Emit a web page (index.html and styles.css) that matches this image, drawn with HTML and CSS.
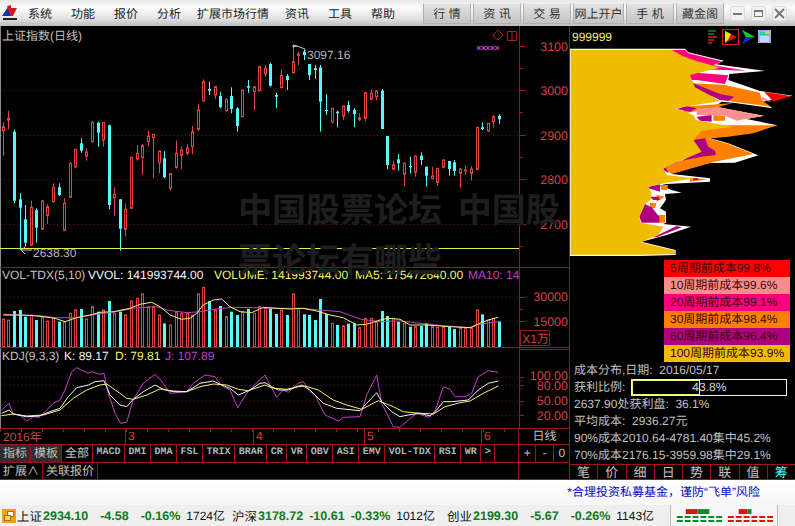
FILE: index.html
```html
<!DOCTYPE html>
<html lang="zh-CN">
<head>
    <meta charset="UTF-8">
    <title>上证指数(日线)</title>
    <link rel="stylesheet" href="styles.css">
</head>
<body>
    <header class="topbar">
        <svg class="logo" width="16" height="17" viewBox="0 0 16 17">
            <polygon points="0,11 6,2 9,11" fill="#1c2f9c"/>
            <polygon points="5,1 9,0 9,3 15,3 11,11 9,11" fill="#d81818"/>
            <rect x="1" y="13" width="14" height="2" fill="#222"/>
        </svg>
        <nav class="menu">
            <a href="#">系统</a>
            <a href="#">功能</a>
            <a href="#">报价</a>
            <a href="#">分析</a>
            <a href="#" class="long">扩展市场行情</a>
            <a href="#">资讯</a>
            <a href="#">工具</a>
            <a href="#">帮助</a>
        </nav>
        <div class="quick-tabs">
            <a href="#">行 情</a>
            <a href="#">资 讯</a>
            <a href="#">交 易</a>
            <a href="#" class="wide">网上开户</a>
            <a href="#">手 机</a>
            <a href="#">藏金阁</a>
        </div>
        <div class="win-buttons">
            <button class="win-btn"><svg width="11" height="11"><rect x="1" y="5" width="9" height="2" fill="#777"/></svg></button>
            <button class="win-btn"><svg width="11" height="11"><rect x="1.5" y="2.5" width="8" height="6" fill="none" stroke="#777"/><rect x="1" y="2" width="9" height="2" fill="#777"/></svg></button>
            <button class="win-btn"><svg width="11" height="11"><path d="M1 1l9 9M10 1l-9 9" stroke="#777" stroke-width="2"/></svg></button>
        </div>
    </header>

    <main class="workspace">
        <section class="chart-pane">
            <svg class="chart" width="570" height="402" viewBox="0 26 570 402">
                <rect x="0" y="26" width="1" height="402" fill="#8a8a8a"/>

                <!-- grid -->
                <g class="grid">
                    <line x1="1" x2="519" y1="90.5" y2="90.5"/>
                    <line x1="1" x2="519" y1="135.5" y2="135.5"/>
                    <line x1="1" x2="519" y1="179.5" y2="179.5"/>
                    <line x1="1" x2="519" y1="224.5" y2="224.5"/>
                    <line x1="1" x2="519" y1="297.5" y2="297.5"/>
                    <line x1="1" x2="519" y1="321.5" y2="321.5"/>
                    <line x1="1" x2="519" y1="377.5" y2="377.5"/>
                    <line x1="1" x2="519" y1="385.5" y2="385.5"/>
                    <line x1="1" x2="519" y1="401.5" y2="401.5"/>
                    <line x1="1" x2="519" y1="415.5" y2="415.5"/>
                </g>

                <line class="low-line" x1="0" x2="519" y1="248.5" y2="248.5"/>

                <g id="candles"></g>
                <g id="bars"></g>
                <g id="lines"></g>

                <!-- panel frame -->
                <g class="frame">
                    <line x1="519.5" x2="519.5" y1="26" y2="428"/>
                    <line x1="0" x2="570" y1="267.5" y2="267.5"/>
                    <line x1="0" x2="570" y1="347.5" y2="347.5"/>
                    <line x1="519" x2="570" y1="349.5" y2="349.5"/>
                    <rect x="520.5" y="330.5" width="29" height="15"/>
                    <path d="M519 46.5h7M519 68.5h4M519 90.5h7M519 112.5h4M519 135.5h7M519 157.5h4M519 179.5h7M519 201.5h4M519 224.5h7M519 246.5h4M519 297.5h7M519 309.5h4M519 321.5h7M519 377.5h5M519 385.5h5M519 401.5h5M519 415.5h5"/>
                </g>

                <!-- titles -->
                <text class="t-gray" x="2" y="40">上证指数(日线)</text>
                <path class="mark" d="M498 30l5 5-5 5-5-5zM507.5 31.5h9v9h-9zM512 31v10"/>
                <text class="t-purple t-marks" x="476" y="51">×××××</text>

                <text class="t-gray" x="2" y="279">VOL-TDX(5,10)</text>
                <text class="t-white" x="88" y="279">VVOL: 141993744.00</text>
                <text class="t-yellow" x="214" y="279">VOLUME: 141993744.00</text>
                <text class="t-yellow" x="355" y="279">MA5: 175472640.00</text>
                <text class="t-purple" x="468" y="279">MA10: 14</text>

                <text class="t-gray" x="2" y="360">KDJ(9,3,3)</text>
                <text class="t-white" x="64" y="360">K: 89.17</text>
                <text class="t-yellow" x="115" y="360">D: 79.81</text>
                <text class="t-purple" x="165" y="360">J: 107.89</text>

                <!-- price labels -->
                <path class="arrow" d="M293 47l4-1M293 47v-2l4 1 8 3 0 2M21 250l4 4M21 250l4-3M21 250h11"/>
                <text class="t-note" x="307" y="59">3097.16</text>
                <text class="t-note" x="33" y="257">2638.30</text>

                <g class="t-axis">
                    <text x="568" y="51">3100</text>
                    <text x="568" y="95">3000</text>
                    <text x="568" y="140">2900</text>
                    <text x="568" y="184">2800</text>
                    <text x="568" y="229">2700</text>
                    <text x="568" y="301">30000</text>
                    <text x="568" y="326">15000</text>
                    <text x="568" y="380">100.00</text>
                    <text x="568" y="390">80.00</text>
                    <text x="568" y="405">50.00</text>
                    <text x="568" y="420">20.00</text>
                    <text class="unit" x="549" y="343">X1万</text>
                </g>
            </svg>

            <div class="date-row">
                <div class="date-scale">
                    <span class="date-first">2016年</span>
                    <span class="date-mark m3">3</span>
                    <span class="date-mark m4">4</span>
                    <span class="date-mark m5">5</span>
                    <span class="date-mark m6">6</span>
                </div>
                <div class="date-unit">日线</div>
            </div>

            <div class="tab-row">
                <div class="tabs">
                    <a href="#" class="tab tab-on">指标</a>
                    <a href="#" class="tab tab-on">模板</a>
                    <a href="#" class="tab">全部</a>
                    <a href="#" class="tab code">MACD</a>
                    <a href="#" class="tab code">DMI</a>
                    <a href="#" class="tab code">DMA</a>
                    <a href="#" class="tab code">FSL</a>
                    <a href="#" class="tab code">TRIX</a>
                    <a href="#" class="tab code">BRAR</a>
                    <a href="#" class="tab code">CR</a>
                    <a href="#" class="tab code">VR</a>
                    <a href="#" class="tab code">OBV</a>
                    <a href="#" class="tab code">ASI</a>
                    <a href="#" class="tab code">EMV</a>
                    <a href="#" class="tab code">VOL-TDX</a>
                    <a href="#" class="tab code">RSI</a>
                    <a href="#" class="tab code">WR</a>
                    <a href="#" class="tab code">&gt;</a>
                </div>
                <div class="zoom-tools">
                    <a href="#">+</a>
                    <a href="#">-</a>
                    <a href="#">0</a>
                </div>
            </div>

            <div class="tab-row">
                <div class="tabs">
                    <a href="#" class="tab">扩展∧</a>
                    <a href="#" class="tab">关联报价</a>
                </div>
                <div class="zoom-tools"></div>
            </div>

            <div class="watermark">中国股票论坛 中国股票论坛有哪些</div>
        </section>

        <aside class="cost-pane">
            <svg class="cost-chart" width="225" height="234" viewBox="570 26 225 234">
                <text class="t-yellow" x="572" y="41">999999</text>

                <!-- tool icons -->
                <path d="M708 31h8M708 34h6" stroke="#0a8a2a" stroke-width="1.5"/>
                <path d="M708 37h9M708 40h6M708 43h4" stroke="#d02020" stroke-width="1.5"/>
                <rect x="722.5" y="29.5" width="16" height="15" fill="none" stroke="#d02020"/>
                <polygon points="725,31 737,37 725,43" fill="#e01010"/>
                <polygon points="725,31 731,34 728,40 725,43" fill="#f0e000"/>
                <polygon points="742,30 755,37 742,44 746,37" fill="#1030e0"/>
                <polygon points="742,30 755,37 746,37" fill="#10d020"/>
                <rect x="758" y="30" width="13" height="13" fill="#9ab0f0"/>
                <rect x="760" y="32" width="9" height="3" fill="#20d0d0"/>
                <path d="M760 37h9M760 39h9M760 41h9" stroke="#fff"/>
                <rect x="765" y="31" width="4" height="3" fill="#e8d020"/>

                <!-- chip distribution, traced at 3x from x=400 -->
                <g transform="translate(400 0) scale(0.3333)">
                    <polygon fill="#fff" points="510,146 855,146 865,157 972,182 948,193 1095,213 988,222 985,240 1080,273 1178,287 1088,305 1118,325 1000,308 965,305 945,320 1092,347 1040,357 1132,376 1075,392 985,408 930,415 985,430 1075,466 1005,488 850,490 830,505 815,522 930,535 930,545 800,552 780,556 815,570 845,578 795,582 798,600 780,625 798,635 798,668 790,672 873,680 800,705 725,725 827,750 827,765 720,768 510,768"/>
                    <polygon fill="#ff0080" points="800,150 855,150 865,160 965,184 940,196 1040,212 900,208 800,180"/>
                    <polygon fill="#ff0080" points="860,225 890,218 985,226 975,252 890,240 860,240"/>
                    <polygon fill="#ff8000" points="880,250 975,255 1080,278 1085,300 1112,320 1000,305 900,280"/>
                    <polygon fill="#b00080" points="860,228 880,250 960,282 1003,290 985,303 960,300 880,262"/>
                    <polygon fill="#ff0000" points="1093,275 1172,288 1120,305"/>
                    <polygon fill="#ff8f8f" points="1085,290 1115,305 1100,303 1085,300"/>
                    <polygon fill="#ff8000" points="850,320 1000,309 965,318 940,326 850,340"/>
                    <polygon fill="#ff8f8f" points="890,326 960,322 1088,348 1010,362 970,345 890,345"/>
                    <polygon fill="#b00080" points="830,327 860,318 890,325 870,335"/>
                    <polygon fill="#ff8000" points="940,345 975,347 975,362 940,362"/>
                    <polygon fill="#b00080" points="890,350 935,345 935,365 900,362"/>
                    <polygon fill="#ff8000" points="880,376 1130,376 1060,400 985,410 925,415 985,432 1060,462 945,485 815,522 792,505 850,480 945,460 880,425"/>
                    <polygon fill="#b00080" points="880,420 915,415 925,440 945,452 948,465 905,470 830,485 795,502 808,520 785,508 850,480 880,460"/>
                    <polygon fill="#ff8000" points="870,533 925,538 870,545"/>
                    <polygon fill="#b00080" points="880,535 895,535 895,540 880,540"/>
                    <polygon fill="#ff8000" points="780,555 805,555 800,570 785,570"/>
                    <polygon fill="#b00080" points="745,560 780,553 780,575 745,565"/>
                    <polygon fill="#ff8000" points="770,585 795,590 770,605"/>
                    <polygon fill="#b00080" points="750,590 775,590 780,600 760,600"/>
                    <polygon fill="#ff8000" points="750,608 770,610 765,625 750,625"/>
                    <polygon fill="#ff8000" points="775,645 795,645 795,668 775,668"/>
                    <polygon fill="#b00080" points="735,612 755,622 778,650 778,668 725,668 718,650"/>
                    <polygon fill="#b00080" points="760,712 830,678 845,682 800,700 770,712"/>
                    <polygon fill="#f0bc00" points="512,150 815,150 848,168 880,180 960,203 870,225 885,262 960,303 828,325 880,345 888,360 1000,380 905,392 880,420 905,455 790,505 800,525 880,535 800,548 745,560 755,580 752,600 735,612 718,650 722,668 790,680 775,705 722,727 825,752 825,762 720,764 512,764"/>
                </g>
            </svg>

            <ul class="legend">
                <li class="c5">5周期前成本99.8%</li>
                <li class="c10">10周期前成本99.6%</li>
                <li class="c20">20周期前成本99.1%</li>
                <li class="c30">30周期前成本98.4%</li>
                <li class="c60">60周期前成本96.4%</li>
                <li class="c100">100周期前成本93.9%</li>
            </ul>

            <div class="stats">
                <div class="stat">成本分布,日期: &nbsp;2016/05/17</div>
                <div class="stat stat-ratio">
                    <span>获利比例:</span>
                    <div class="ratio-box">
                        <div class="ratio-fill" style="width: 43.8%"></div>
                        <span class="ratio-text">43.8%</span>
                    </div>
                </div>
                <div class="stat">2637.90处获利盘: &nbsp;36.1%</div>
                <div class="stat">平均成本: &nbsp;2936.27元</div>
                <div class="stat">90%成本2010.64-4781.40集中45.2%</div>
                <div class="stat">70%成本2176.15-3959.98集中29.1%</div>
            </div>

            <div class="cost-tabs">
                <a href="#">笔</a>
                <a href="#">价</a>
                <a href="#">细</a>
                <a href="#">日</a>
                <a href="#">势</a>
                <a href="#">联</a>
                <a href="#">值</a>
                <a href="#" class="active">筹</a>
            </div>
        </aside>
    </main>

    <div class="notice">*合理投资私募基金，谨防“飞单”风险</div>

    <footer class="statusbar">
        <svg class="status-icon" width="14" height="14" viewBox="0 0 14 14">
            <rect width="14" height="14" fill="#f0a020"/>
            <rect x="5.5" y="2.5" width="6" height="5" fill="#fff" stroke="#b86a00"/>
            <rect x="2.5" y="6.5" width="6" height="5" fill="#f8d080" stroke="#b86a00"/>
        </svg>
        <div class="quote">
            <span class="q-name">上证</span>
            <span class="q-num">2934.10</span>
            <span class="q-num q-chg">-4.58</span>
            <span class="q-num q-chg">-0.16%</span>
            <span class="q-vol">1724亿</span>
        </div>
        <div class="quote">
            <span class="q-name">沪深</span>
            <span class="q-num">3178.72</span>
            <span class="q-num q-chg tight">-10.61</span>
            <span class="q-num q-chg tight">-0.33%</span>
            <span class="q-vol">1012亿</span>
        </div>
        <div class="quote">
            <span class="q-name">创业</span>
            <span class="q-num">2199.30</span>
            <span class="q-num q-chg">-5.67</span>
            <span class="q-num q-chg">-0.26%</span>
            <span class="q-vol">1143亿</span>
        </div>
        <svg class="flags" width="108" height="21" viewBox="0 0 108 21">
            <rect x="15" y="4" width="12" height="5" fill="#e01010"/>
            <rect x="27" y="4" width="12" height="5" fill="#0a8a2a"/>
            <path d="M6 12h47M6 16h47" stroke="#0a8a2a" stroke-width="2" stroke-dasharray="6 2"/>
            <rect x="69" y="4" width="9" height="5" fill="#e01010"/>
            <rect x="78" y="4" width="4" height="5" fill="#0a8a2a"/>
            <path d="M58 12h47M58 16h47" stroke="#e01010" stroke-width="2" stroke-dasharray="6 2"/>
        </svg>
    </footer>

    <script src="chart.js"></script>
</body>
</html>
```

FILE: styles.css
```css
:root {
    --line: #a01414;
    --axis: #d04040;
    --gray: #c0c0c0;
    --yellow: #f4f46c;
    --purple: #c040c8;
    --up: #e04444;
    --down: #54fcfc;
}

* {
    margin: 0;
    padding: 0;
    box-sizing: border-box;
}

body {
    width: 795px;
    height: 526px;
    overflow: hidden;
    background: #f4f4f4;
    font-family: "Liberation Sans", "Noto Sans CJK SC", sans-serif;
    font-size: 12px;
    text-rendering: geometricPrecision;
}

a {
    color: inherit;
    text-decoration: none;
}

ul {
    list-style: none;
}

/* Top bar */
.topbar {
    display: flex;
    align-items: center;
    height: 26px;
    background: linear-gradient(#e8e8e8, #fbfbfb 30%, #e4e4e4 70%, #bcbcbc);
    color: #222;
}

.logo {
    flex: none;
    margin: 0 10px 0 2px;
}

.menu {
    display: flex;
    gap: 19px;
    width: 395px;
    font-size: 12px;
}

.menu .long {
    margin: 0 -3px;
}

.quick-tabs {
    display: flex;
    gap: 2px;
    height: 21px;
}

.quick-tabs a {
    display: flex;
    align-items: center;
    justify-content: center;
    width: 48px;
    background: linear-gradient(#e2e2e2, #c4c4c4);
    border: 1px solid #b0b0b0;
    border-top-color: #efefef;
    color: #333;
}

.quick-tabs .wide {
    width: 51px;
}

.win-buttons {
    display: flex;
    gap: 6px;
    margin-left: 6px;
}

.win-btn {
    display: flex;
    align-items: center;
    justify-content: center;
    width: 15px;
    height: 15px;
    border: 1px solid #ddd;
    border-radius: 3px;
    background: #f2f2f2;
}

/* Workspace */
.workspace {
    display: flex;
    height: 454px;
    background: #000;
    border-bottom: 1px solid var(--line);
}

.chart-pane {
    position: relative;
    display: flex;
    flex-direction: column;
    width: 570px;
    flex: none;
}

.chart {
    display: block;
    flex: none;
}

.chart text {
    font-size: 12px;
}

.chart .t-note {
    fill: #b8b8b8;
}

.chart .t-marks {
    font-size: 9px;
    font-weight: bold;
    letter-spacing: -0.6px;
}

.t-gray { fill: var(--gray); }
.t-white { fill: #f4f4f4; }
.t-yellow { fill: var(--yellow); }
.t-purple { fill: var(--purple); }

.chart .t-axis text {
    fill: var(--axis);
    font-size: 12.5px;
    text-anchor: end;
}

.chart .t-axis .unit {
    font-size: 12px;
}

.grid line {
    stroke: #701414;
    stroke-dasharray: 1 3;
}

.low-line {
    stroke: #e8f04c;
}

.frame line,
.frame path,
.frame rect {
    stroke: var(--line);
    fill: none;
}

.mark {
    stroke: #b02020;
    fill: none;
}

.arrow {
    stroke: #c8c8c8;
    fill: none;
}

.candle-up {
    stroke: var(--up);
    fill: #000;
}

.wick-up { stroke: var(--up); }
.wick-down { stroke: var(--down); }

.candle-down {
    fill: var(--down);
}

.bar-up {
    stroke: var(--up);
    fill: none;
}

.bar-down {
    fill: var(--down);
}

.line-k { stroke: #f4f4f4; }
.line-d { stroke: var(--yellow); }
.line-j { stroke: var(--purple); }

#lines polyline {
    fill: none;
}

/* Date row */
.date-row {
    display: flex;
    height: 16px;
    flex: none;
    border-top: 1px solid var(--line);
}

.date-scale {
    position: relative;
    width: 519px;
    background: repeating-linear-gradient(90deg, var(--line) 0 1px, transparent 1px 21px) top / 100% 3px no-repeat;
    color: var(--axis);
    font-size: 12px;
    line-height: 16px;
    border-right: 1px solid var(--line);
}

.date-first {
    margin-left: 3px;
}

.date-mark {
    position: absolute;
    top: -1px;
    padding-left: 2px;
    height: 16px;
    border-left: 1px solid var(--line);
}

.m3 { left: 125px; }
.m4 { left: 253px; }
.m5 { left: 364px; }
.m6 { left: 481px; }

.date-unit {
    width: 51px;
    color: var(--gray);
    text-align: center;
    line-height: 15px;
}

/* Tabs */
.tab-row {
    display: flex;
    height: 18px;
    flex: none;
    border-top: 1px solid var(--line);
}

.tabs {
    display: flex;
    width: 519px;
    border-right: 1px solid var(--line);
}

.tab {
    padding: 0 3px;
    border-right: 1px solid var(--line);
    color: var(--gray);
    font-size: 12px;
    line-height: 16px;
    white-space: nowrap;
}

.tab-on {
    background: #2e2e2e;
}

.code {
    padding: 0 3.5px;
    color: #b4b4b4;
    font-family: "Liberation Mono", monospace;
    font-size: 10px;
    font-weight: bold;
}

.zoom-tools {
    display: flex;
    width: 51px;
}

.zoom-tools a {
    flex: 1;
    color: var(--gray);
    text-align: center;
    line-height: 16px;
    border-right: 1px solid var(--line);
}

.zoom-tools a:last-child {
    border-right: none;
}

.watermark {
    position: absolute;
    left: 238px;
    top: 157px;
    width: 332px;
    color: #1e1e1e;
    font-family: "Noto Sans CJK SC", sans-serif;
    font-size: 34px;
    font-weight: bold;
    line-height: 50px;
    word-spacing: 8px;
    word-break: break-all;
}

/* Cost distribution */
.cost-pane {
    flex: 1;
    display: flex;
    flex-direction: column;
    border-left: 1px solid var(--line);
    margin-left: -1px;
}

.cost-chart {
    display: block;
    flex: none;
}

.cost-chart text {
    font-size: 12px;
}

.legend {
    height: 102px;
    margin-left: 94px;
    margin-right: 5px;
    flex: none;
}

.legend li {
    height: 17px;
    padding-left: 6px;
    color: #3a0808;
    font-size: 12px;
    line-height: 17px;
    white-space: nowrap;
}

.c5 { background: #fc0000; }
.c10 { background: #fb8c8c; }
.c20 { background: #fc0080; }
.c30 { background: #fc8000; }
.c60 { background: #b00080; }
.c100 { background: #f0bc00; }

.stats {
    flex: none;
    height: 102px;
    padding-left: 4px;
    color: var(--gray);
    font-size: 12px;
    line-height: 17px;
    white-space: nowrap;
}

.stat {
    height: 17px;
}

.stat-ratio {
    display: flex;
    gap: 6px;
}

.ratio-box {
    position: relative;
    width: 156px;
    height: 17px;
    border: 1px solid #f4f4f4;
}

.ratio-fill {
    height: 100%;
    border: 1px solid var(--yellow);
}

.ratio-text {
    position: absolute;
    top: -1px;
    left: 0;
    width: 100%;
    text-align: center;
    color: #d8d8d8;
}

.cost-tabs {
    display: flex;
    flex: 1;
    border-top: 1px solid var(--line);
}

.cost-tabs a {
    flex: 1;
    color: var(--gray);
    font-size: 13px;
    line-height: 15px;
    text-align: center;
    border-right: 1px solid var(--line);
}

.cost-tabs .active {
    color: var(--down);
    border-right: none;
}

/* Bottom */
.notice {
    height: 25px;
    padding-right: 35px;
    background: linear-gradient(#fff, #f6f6f6);
    color: #0808c0;
    font-size: 12px;
    line-height: 25px;
    text-align: right;
}

.statusbar {
    display: flex;
    align-items: center;
    height: 21px;
    background: #efefef;
    white-space: nowrap;
}

.status-icon {
    flex: none;
    margin: 0 1px 0 2px;
}

.quote {
    display: flex;
    align-items: center;
    width: 215px;
    flex: none;
}

.q-name {
    width: 26px;
    color: #111;
    font-size: 12.5px;
}

.q-num {
    color: #0a7a1a;
    font-size: 12.5px;
    font-weight: bold;
}

.q-chg {
    margin-left: 12px;
}

.q-chg.tight {
    margin-left: 6px;
}

.q-vol {
    margin-left: 6px;
    color: #111;
    font-size: 12px;
}

.flags {
    flex: none;
    margin-left: 8px;
    background: #f6f6f6;
    border-left: 1px solid #bbb;
    border-right: 1px solid #bbb;
}
```

FILE: chart.js
```js
const SVG_NS = "http://www.w3.org/2000/svg";

// wick top, body top, body bottom, wick bottom, 1 = red
const candles = [
    [122.3,126.7,130.7,155.7,1],[110.7,118.3,120,129.3,1],[129.3,131.7,200.7,203.3,0],[193.3,199.3,207.7,250,0],[205,219.3,242.7,246.7,0],
    [200.7,207.3,245,246,1],[208.3,210,227.7,242.7,0],[200,201,229.3,230,1],[204.3,206.7,215.3,224.3,1],[183.3,187.3,201.7,202.3,1],
    [183.3,187.3,195,196,0],[198.3,203.3,230.3,231,1],[162.3,163.3,197.3,197.7,1],[149.3,149.3,167,167.7,1],[138.3,143.3,150.7,152.7,0],
    [148.3,152,156,160.7,1],[121,122.3,141.7,142.7,1],[121.7,122.7,132.7,146.7,0],[122.3,122.3,140,146.7,1],[124.7,125.3,205,209.3,0],
    [187.3,194.3,197.7,216,1],[199.3,199.3,228.7,250.7,0],[203.3,209.3,229.3,236.7,1],[156.7,157.3,208.3,208.7,1],[145,153.3,159,160.7,1],
    [144,145.7,157.7,175,1],[130.7,136,141.7,146.7,1],[134,134.3,137.7,177.7,1],[151,151,162.7,173.3,1],[151,158.3,177.3,178.3,0],
    [173.3,173.7,188.3,190.7,1],[140.7,153.3,167.3,168.7,1],[146.7,150,155.3,169.3,1],[144.3,148,153.3,155,1],[126,131.7,146.7,154.3,1],
    [104,110,129.3,131,1],[79.3,81.7,100.7,101.7,1],[81.7,89,90.7,95,0],[86,86.7,95,99,1],[91.7,96,107.3,108.3,0],
    [98.7,99.3,110.7,111.7,1],[87.3,96,109,113.3,0],[107.3,108.3,126,131.7,0],[90,90,116.7,116.7,1],[80,86,87.7,92.7,0],
    [86,86.7,91.7,110,1],[66,66.7,90.7,91.7,1],[65,68.3,74,76.7,1],[62.7,64,85.7,86.7,0],[92.7,95,96.7,108.3,0],
    [69.3,75.3,87.7,88.3,1],[74,76,80,90,0],[46,61.7,72.7,73.3,1],[51.7,54,55.3,65,1],[50,51.7,55,60,0],
    [64,64,75,80,0],[65,68.3,70,79,0],[65,67.3,101.7,131.7,0],[94,110,111,115,0],[108.3,108.3,121.7,123.3,1],
    [110.7,111.7,113.3,127.3,0],[106,106,116,120,1],[101,105,111,112.7,0],[108.3,110,114,127.3,0],[113.3,118,119.7,121,1],
    [92.7,92.7,118.3,121,1],[89.3,93.3,99.3,100,1],[90,91,96.7,100,1],[89,90.7,129,129,0],[136,136,165,169.3,0],
    [160.7,165,169.3,170,1],[154,159.3,163.3,170.7,0],[162.7,163.3,174.3,186.7,1],[156.7,166,167.3,173.3,0],[156,156,172.3,176.7,1],
    [152.3,155.7,160,165,0],[166.7,166.7,175.7,186.7,0],[166.7,176,178.7,179,1],[168.3,168.3,182.3,186,1],[159.3,160,167.3,168.3,1],
    [161,161,169,175.7,0],[160,162.3,171,175.7,0],[168.3,169,173.3,187.7,1],[165.7,170,171,175,1],[166,169,173.3,180.7,1],
    [127.3,127.3,169.3,170,1],[122.3,127.3,129,130,0],[123.3,123.3,131,131.7,1],[115,116.7,121.7,127.7,1],[114.3,116,119.3,124.3,0]
];

// volume bar tops, read off the 3x crops
const volLeft = [162,165,138,135,155,150,165,155,168,160,170,170,145,135,132,162,125,140,135,108,145,140,150,108,100,87,125,125,150,175,180,140,145,145,150,87,67,108,135,123,155,140,150,140,132,145,125,128,130,147,135,150,87,130,148,150,165,102,147,175,180,182,176,175,188,160,160,170,138,153,160];
const volRight = [200,205,215,215,213,205,215,217,215,215,222,218,218,218,165,178,195,190,200];
const volTops = volLeft.map(z => 265 + z / 3).concat(volRight.map(z => 255 + z / 3));

// line charts: [x, y] pairs at 3x, with the crop origin
const ma5 = [
    [0, 265, [10,150,60,150,100,152,130,155,165,160,195,170,230,158,270,150,300,142,340,140,390,130,420,118,455,112,480,125,510,150,545,163,570,160,590,145,610,120,640,105,665,102,690,125,720,140,755,143,790,127,830,130,870,132,910,130,950,138,990,150,1030,158,1070,180,1100,178,1140,165,1165,160,1200,163]],
    [400, 255, [30,210,80,210,150,215,210,218,240,205,265,195,295,187]]
];
const ma10 = [
    [0, 265, [10,148,60,150,120,152,170,158,230,158,290,148,350,140,400,130,470,125,500,135,560,143,600,140,650,132,700,127,760,128,820,130,900,130,960,135,1020,140,1080,162,1140,170,1200,168]],
    [400, 255, [60,205,130,212,210,218,240,207,298,200]]
];
const kdjJ = [
    [0, 340, [5,210,27,190,40,222,60,225,80,243,100,230,117,232,135,215,160,190,180,180,195,150,215,95,230,83,265,100,275,95,300,103,312,100,325,160,345,220,362,250,380,247,400,178,430,130,465,103,482,120,510,160,560,155,580,130,615,105,645,110,665,137,690,150,713,203,740,160,780,118]],
    [260, 340, [15,105,25,125,50,172,70,150,85,157,115,130,130,125,150,155,165,165,195,225,235,243,250,232,300,230,320,165,350,105,365,190,400,260,420,262,445,240,470,220,505,232,525,215,550,140,570,148,585,170,615,170,635,160,655,110,685,92,715,97]]
];
const kdjK = [
    [0, 340, [5,220,27,210,40,222,80,230,117,228,150,215,180,205,205,170,230,143,265,135,285,125,312,122,330,165,360,195,380,200,400,178,430,155,465,135,490,148,520,155,560,155,600,130,640,123,665,135,690,145,715,165,750,150,780,130]],
    [260, 340, [15,128,35,140,55,150,85,150,125,135,150,150,190,190,230,205,300,212,320,190,350,158,365,185,395,215,420,230,445,225,480,220,510,228,530,210,550,185,575,185,625,180,655,150,685,130,715,123]]
];
const kdjD = [
    [0, 340, [5,227,40,222,80,228,130,225,180,210,220,175,260,150,300,135,320,132,360,160,380,175,400,178,440,165,480,147,520,153,560,155,600,140,640,132,680,135,715,148,745,152,780,140]],
    [260, 340, [15,135,40,145,80,148,115,140,135,138,175,150,220,180,260,195,305,208,355,182,400,200,430,215,480,220,520,222,555,200,600,188,630,183,670,160,715,138]]
];

function add(parent, tag, attrs) {
    const el = document.createElementNS(SVG_NS, tag);
    for (const key in attrs) {
        el.setAttribute(key, attrs[key]);
    }
    parent.appendChild(el);
    return el;
}

function candleX(i) {
    return Math.floor(3.3 + i * 5.573);
}

function drawCandles() {
    const group = document.getElementById("candles");
    candles.forEach((c, i) => {
        const x = candleX(i);
        const up = c[4] === 1;
        add(group, "line", { x1: x + 0.5, x2: x + 0.5, y1: c[0], y2: c[3], class: up ? "wick-up" : "wick-down" });
        if (up) {
            add(group, "rect", { x: x - 0.5, y: c[1], width: 2, height: c[2] - c[1], class: "candle-up" });
        } else {
            add(group, "rect", { x: x - 1, y: c[1], width: 3, height: Math.max(c[2] - c[1], 1), class: "candle-down" });
        }
    });
}

function drawBars() {
    const group = document.getElementById("bars");
    volTops.forEach((top, i) => {
        const x = candleX(i);
        if (candles[i][4] === 1) {
            add(group, "rect", { x: x - 0.5, y: top, width: 2, height: 347 - top, class: "bar-up" });
        } else {
            add(group, "rect", { x: x - 1, y: top, width: 3, height: 347 - top, class: "bar-down" });
        }
    });
}

function toPoints(parts) {
    const out = [];
    parts.forEach(([ox, oy, list]) => {
        for (let i = 0; i < list.length; i += 2) {
            out.push((ox + list[i] / 3).toFixed(1) + "," + (oy + list[i + 1] / 3).toFixed(1));
        }
    });
    return out.join(" ");
}

function drawLines() {
    const group = document.getElementById("lines");
    add(group, "polyline", { points: toPoints(ma10), class: "line-j" });
    add(group, "polyline", { points: toPoints(ma5), class: "line-d" });
    add(group, "polyline", { points: toPoints(kdjJ), class: "line-j" });
    add(group, "polyline", { points: toPoints(kdjD), class: "line-d" });
    add(group, "polyline", { points: toPoints(kdjK), class: "line-k" });
}

drawCandles();
drawBars();
drawLines();
```
